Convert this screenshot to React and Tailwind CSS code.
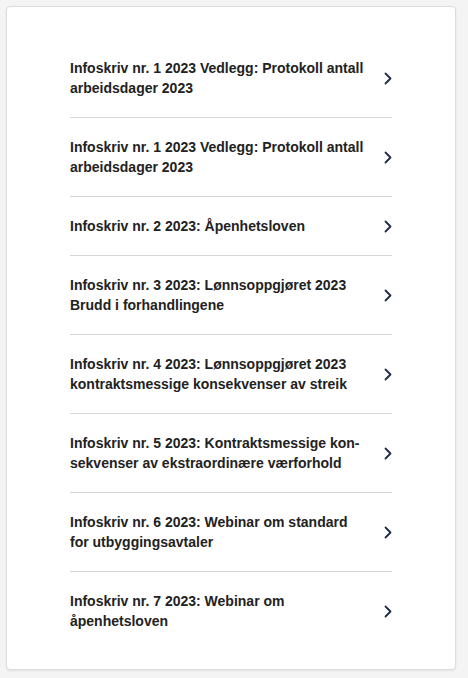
import React from 'react';

const items = [
  'Infoskriv nr. 1 2023 Vedlegg: Protokoll antall arbeidsdager 2023',
  'Infoskriv nr. 1 2023 Vedlegg: Protokoll antall arbeidsdager 2023',
  'Infoskriv nr. 2 2023: Åpenhetsloven',
  'Infoskriv nr. 3 2023: Lønnsoppgjøret 2023 Brudd i forhandlingene',
  'Infoskriv nr. 4 2023: Lønnsoppgjøret 2023 kontraktsmessige konsekvenser av streik',
  'Infoskriv nr. 5 2023: Kontraktsmessige kon\u00ADsekvenser av ekstraordinære værforhold',
  'Infoskriv nr. 6 2023: Webinar om standard for utbyggingsavtaler',
  'Infoskriv nr. 7 2023: Webinar om åpenhetsloven',
];

const Chevron = () => (
  <svg width="8" height="13" viewBox="0 0 8 13" fill="none" className="shrink-0">
    <polyline points="1.5,1.5 6.5,6.5 1.5,11.5" stroke="#1e2b45" strokeWidth="1.8" strokeLinecap="round" strokeLinejoin="round" />
  </svg>
);

const App = () => {
  return (
    <div className="min-h-screen bg-[#f4f4f4] pt-[6px] pl-[6px] pr-[12px] pb-[10px]" style={{ fontFamily: '"Liberation Sans", Arial, sans-serif' }}>
      <div className="bg-white border border-[#dcdcdc] rounded-[4px] shadow-[0_1px_2px_rgba(0,0,0,0.08)] px-[63px] pt-[32px] pb-[19px]">
        <ul>
          {items.map((title, i) => (
            <li key={i} className={`flex items-center justify-between py-[19px] ${i < items.length - 1 ? 'border-b border-[#d6d6d6]' : ''}`}>
              <a href="#" className="w-[300px] text-[14px] leading-[20px] font-bold text-[#222]">{title}</a>
              <Chevron />
            </li>
          ))}
        </ul>
      </div>
    </div>
  );
};

export default App;
